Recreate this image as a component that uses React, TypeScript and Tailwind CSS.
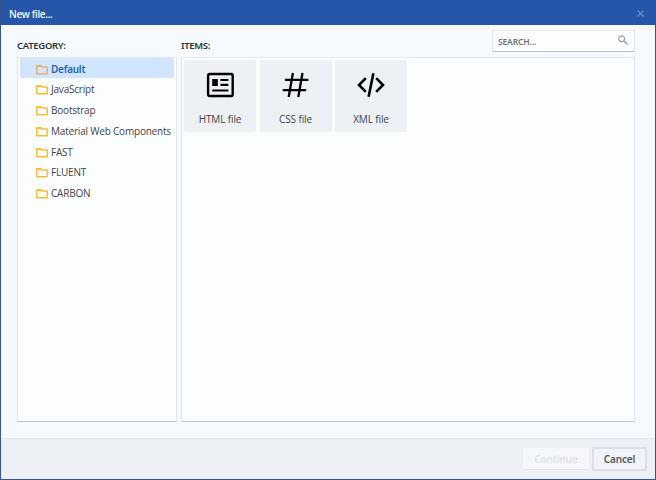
import React from "react";

const categories = [
  "Default",
  "JavaScript",
  "Bootstrap",
  "Material Web Components",
  "FAST",
  "FLUENT",
  "CARBON",
];

function FolderIcon({ active }: { active: boolean }) {
  return (
    <svg className={`h-[11px] w-3 shrink-0 ${active ? "text-[#e5b36e]" : "text-[#f8bf2c]"}`} viewBox="0 0 12 11" fill="none">
      <path d="M.8 9.7V1.8h3.9l1.2 1.1h5.3v6.8z" stroke="currentColor" strokeWidth="1.5" strokeLinejoin="round" />
      <path d="M1 3V1.3h3.8L6 3z" fill="currentColor" />
    </svg>
  );
}

function HtmlIcon() {
  return (
    <svg className="h-[26px] w-[28px]" viewBox="0 0 28 26" fill="none" stroke="#000">
      <rect x="2.1" y="2" width="24.6" height="22" rx="1.5" strokeWidth="2.4" />
      <path d="M6.2 7h5.6v7H6.2z" fill="#000" stroke="none" />
      <path d="M14.4 8h8M14.4 12.9h8M6.2 18.5h16.2" strokeWidth="2.2" />
    </svg>
  );
}

function HashIcon() {
  return (
    <svg className="h-[26px] w-[28px]" viewBox="0 0 28 26" fill="none" stroke="#000" strokeWidth="2.3">
      <path d="M10.9 1 6.7 25M20.5 1l-4.2 24M2.9 7.8h23.5M.7 18.2h23.5" />
    </svg>
  );
}

function CodeIcon() {
  return (
    <svg className="h-[26px] w-[28px]" viewBox="0 0 28 26" fill="none" stroke="#000" strokeWidth="2.6">
      <path d="m8.8 6.2-6.8 6.8 6.8 6.8M19.2 6.2l6.8 6.8-6.8 6.8M16.4 1.2l-4.8 23.6" />
    </svg>
  );
}

const items = [
  { label: "HTML file", Icon: HtmlIcon },
  { label: "CSS file", Icon: HashIcon },
  { label: "XML file", Icon: CodeIcon },
];

export default function App() {
  return (
    <div className="flex h-[480px] w-[656px] flex-col border border-t-0 border-[#36558f] bg-[#f6faff] font-['Open_Sans','Noto_Sans',sans-serif] text-[10px] leading-[14px] text-[#424448]">
      <header className="flex h-[25px] shrink-0 items-center justify-between bg-[#2656aa] pt-[2px] pr-[11px] pl-2 text-white">
        <h1 className="font-['Noto_Sans',sans-serif] font-medium tracking-[-0.3px]">New file...</h1>
        <svg className="h-[7px] w-[7px]" viewBox="0 0 7 7" stroke="#7791c7" strokeWidth="1.2">
          <path d="m.7.7 5.6 5.6M6.3.7.7 6.3" />
        </svg>
      </header>

      <main className="flex min-h-0 flex-1 gap-1 pr-5 pl-4">
        <section className="flex w-40 shrink-0 flex-col">
          <h2 className="flex h-8 items-end pb-1 font-['Noto_Sans',sans-serif] text-[9.5px] font-semibold tracking-[-0.3px] text-[#303134]">CATEGORY:</h2>
          <div className="h-[365px] border border-[#e2e5eb] border-b-[#bec1c8] bg-[#fcfdff] px-[2px]">
            {categories.map((name, i) => (
              <div
                key={name}
                className={`mb-[0.8px] flex h-5 items-center gap-[3px] rounded-[2px] pt-[2px] pl-4 whitespace-nowrap ${
                  i === 0
                    ? "bg-[#d2e5ff] font-['Noto_Sans',sans-serif] font-semibold tracking-[-0.25px] text-[#2464b4]"
                    : "tracking-[-0.2px]"
                }`}
              >
                <FolderIcon active={i === 0} />
                <span className="pb-px">{name}</span>
              </div>
            ))}
          </div>
        </section>

        <section className="flex flex-1 flex-col">
          <div className="flex h-8 items-start justify-between">
            <h2 className="flex h-8 items-end pb-1 font-['Noto_Sans',sans-serif] text-[9.5px] font-semibold tracking-[-0.3px] text-[#303134]">ITEMS:</h2>
            <div className="mt-[5px] flex h-[22px] w-[143px] items-center justify-between border border-[#e2e5eb] border-b-[#bec1c8] bg-[#fcfdff] pr-[6px] pl-[5px]">
              <span className="pt-[2px] font-['Noto_Sans',sans-serif] text-[8.5px] font-semibold tracking-[-0.15px] text-[#707276]">SEARCH...</span>
              <svg className="mb-[3px] h-[10px] w-[10px]" viewBox="0 0 10 10" fill="none" stroke="#9b9da2" strokeWidth="1.2">
                <circle cx="3.7" cy="3.7" r="2.9" />
                <path d="m6 6 3.5 3.5" />
              </svg>
            </div>
          </div>
          <div className="flex h-[365px] items-start gap-[3.5px] border border-[#e2e5eb] border-b-[#bec1c8] bg-[#fcfdff] p-[2px]">
            {items.map(({ label, Icon }) => (
              <div key={label} className="flex h-[72px] w-[72px] flex-col items-center rounded-[2px] bg-[#edf1f6] pt-3">
                <Icon />
                <span className="mt-[14px] tracking-[-0.13px]">{label}</span>
              </div>
            ))}
          </div>
        </section>
      </main>

      <footer className="flex h-[41px] shrink-0 items-center justify-end gap-[3px] border-t border-[#e2e6ec] bg-[#edf0f5] pr-2 font-['Noto_Sans',sans-serif] font-semibold tracking-[-0.15px]">
        <button className="flex h-[22px] w-[66px] items-center justify-center border-b border-[#dfe2e6] bg-[#f5f7fa] pt-px text-[#dfe2e7]">
          Continue
        </button>
        <button className="flex h-6 w-[55px] items-center justify-center border-2 border-[#dce0e6] bg-[#f0f3f7] text-[#54575d]">
          Cancel
        </button>
      </footer>
    </div>
  );
}
